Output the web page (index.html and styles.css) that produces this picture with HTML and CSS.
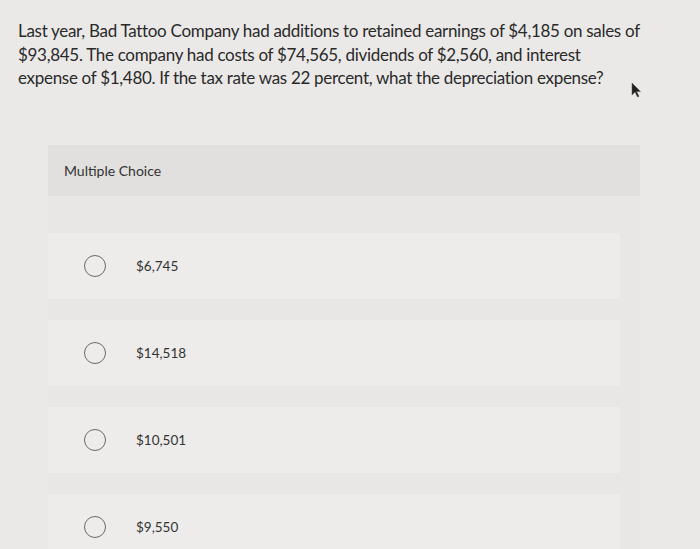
FILE: index.html
```html
<!DOCTYPE html>
<html>
<head>
<meta charset="utf-8">
<link rel="stylesheet" href="styles.css">
</head>
<body>
<div class="page">
  <p class="question">Last year, Bad Tattoo Company had additions to retained earnings of $4,185 on sales of<br>$93,845. The company had costs of $74,565, dividends of $2,560, and interest<br>expense of $1,480. If the tax rate was 22 percent, what the depreciation expense?</p>
  <div class="mc">
    <div class="mc-head">Multiple Choice</div>
    <div class="mc-options">
      <div class="opt"><span class="radio"></span><span class="label">$6,745</span></div>
      <div class="opt"><span class="radio"></span><span class="label">$14,518</span></div>
      <div class="opt"><span class="radio"></span><span class="label">$10,501</span></div>
      <div class="opt"><span class="radio"></span><span class="label">$9,550</span></div>
    </div>
  </div>
  <svg class="cursor" width="12" height="16" viewBox="0 0 12 16"><path d="M2 1 L2 13 L5 10 L7.5 15 L9 14.3 L6.6 9.5 L10.5 9.5 Z" fill="#222" stroke="#555" stroke-width="0.5"/></svg>
</div>
</body>
</html>
```
FILE: styles.css
```css
html, body {
  margin: 0;
  padding: 0;
  background: #eae9e7;
}
.page {
  position: relative;
  width: 700px;
  height: 549px;
  overflow: hidden;
  font-family: "Lato", "Liberation Sans", sans-serif;
  color: #2b2b2b;
}
.question {
  margin: 0;
  padding: 19px 0 0 18px;
  font-size: 17px;
  letter-spacing: -0.3px;
  line-height: 23.5px;
  color: #2a2a2a;
  white-space: nowrap;
}
.mc {
  margin: 55px 0 0 48px;
  width: 592px;
}
.mc-head {
  height: 51px;
  background: #e1e0de;
  padding-left: 16px;
  display: flex;
  align-items: center;
  font-size: 14px;
  color: #333;
}
.mc-options {
  padding-top: 37px;
  background: #e8e7e5;
}
.opt {
  height: 66px;
  margin-bottom: 21px;
  margin-right: 20px;
  background: #edecea;
  display: flex;
  align-items: center;
}
.radio {
  width: 20px;
  height: 20px;
  border: 1.5px solid #6a6a6a;
  border-radius: 50%;
  margin-left: 36px;
  flex: none;
}
.label {
  margin-left: 30px;
  font-size: 13.5px;
  color: #333;
}
.cursor {
  position: absolute;
  left: 630px;
  top: 82px;
}
```
